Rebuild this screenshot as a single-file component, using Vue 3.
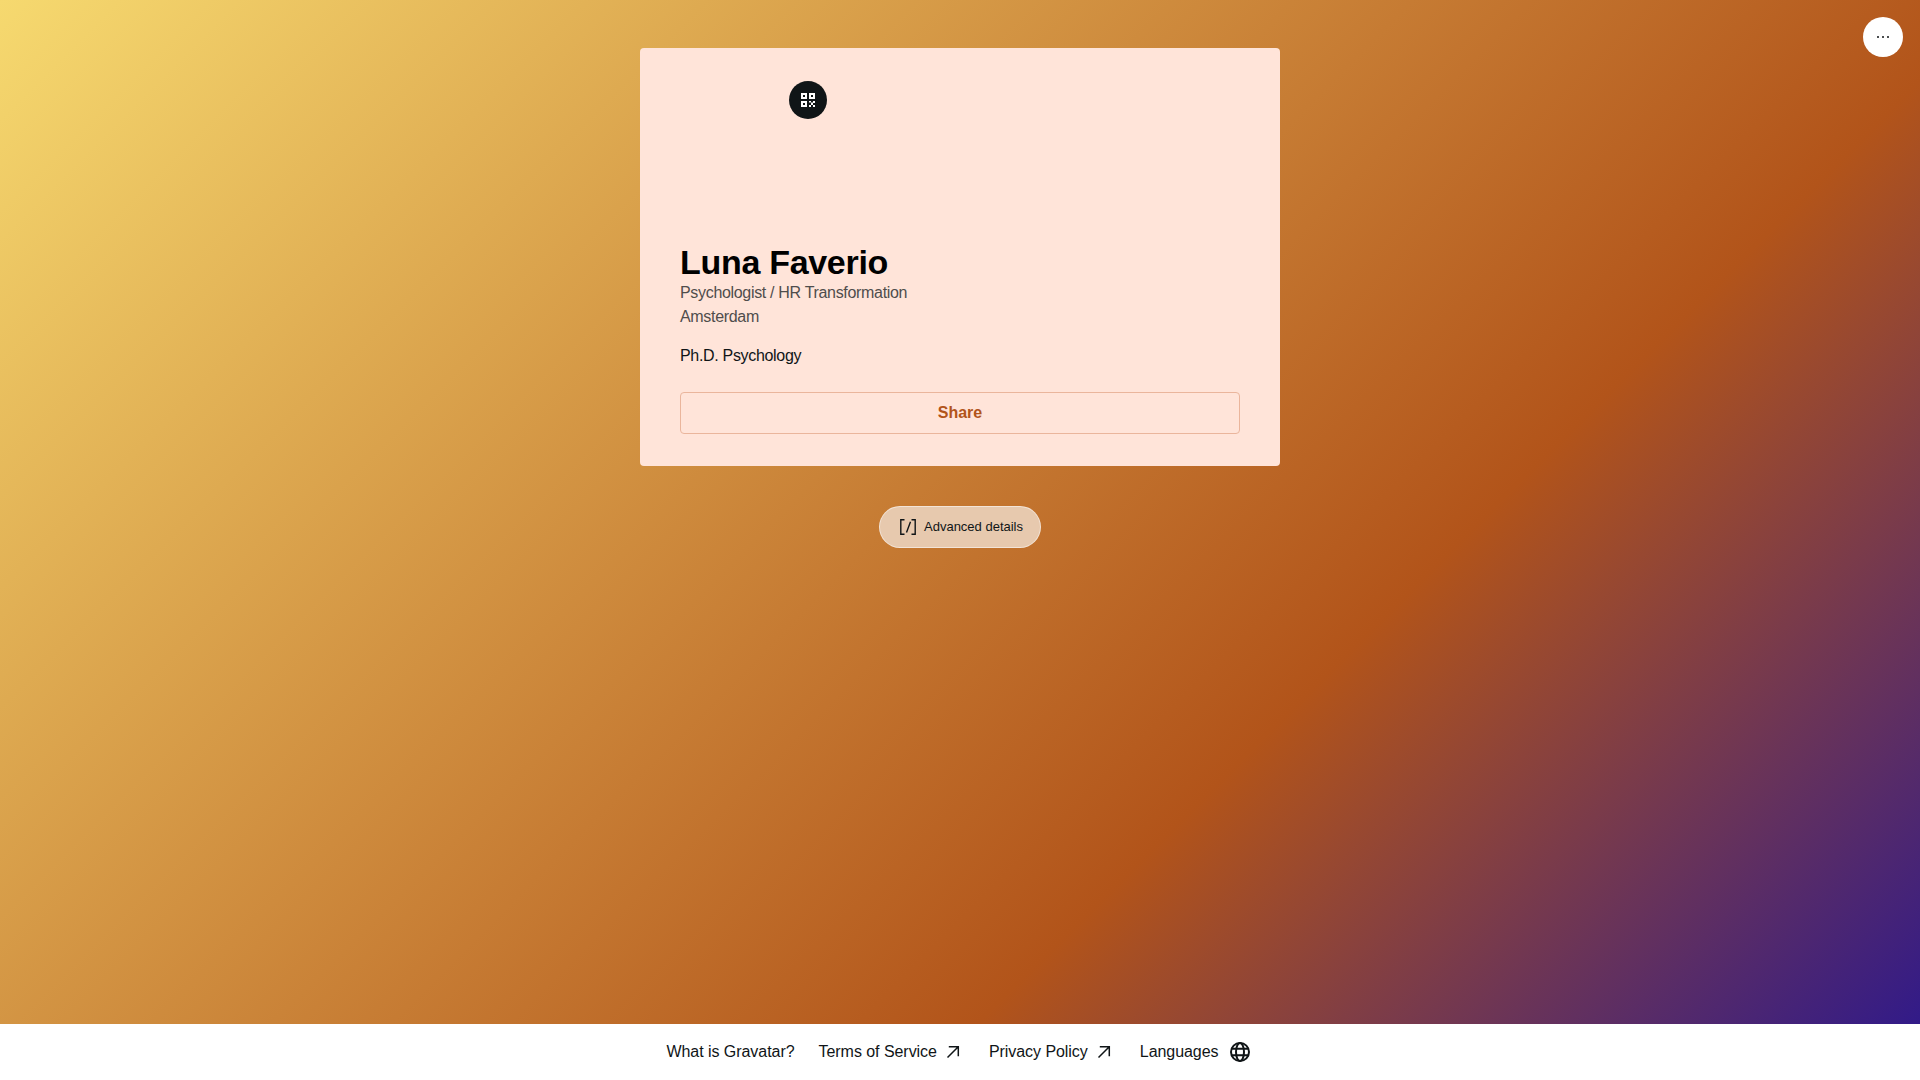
<script setup>
const footerLinks = [
  { label: "What is Gravatar?", icon: null },
  { label: "Terms of Service", icon: "arrow" },
  { label: "Privacy Policy", icon: "arrow" },
  { label: "Languages", icon: "globe" },
];
</script>

<template>
  <div class="page">
    <button class="menu-btn" aria-label="More">
      <svg width="24" height="24" viewBox="0 0 24 24" fill="#101517">
        <rect x="6" y="11" width="2" height="2" rx="1" />
        <rect x="11" y="11" width="2" height="2" rx="1" />
        <rect x="16" y="11" width="2" height="2" rx="1" />
      </svg>
    </button>

    <main class="content">
      <section class="card">
        <button class="qr-btn" aria-label="QR code">
          <svg width="16" height="16" viewBox="0 0 16 16" fill="#fff">
            <path fill-rule="evenodd" d="M1 1h6v6H1zM3 3v2h2V3zM9 1h6v6H9zM11 3v2h2V3zM1 9h6v6H1zM3 11v2h2v-2z" />
            <path d="M9 9h2v1.500H9zM13 9h2v2h-2zM11 10.500h2V13h-2zM9 13h2v2H9zM13 13h2v2h-2z" />
          </svg>
        </button>
        <div class="avatar-slot"></div>
        <h1 class="name">Luna Faverio</h1>
        <p class="meta">Psychologist / HR Transformation</p>
        <p class="meta">Amsterdam</p>
        <p class="bio">Ph.D. Psychology</p>
        <button class="share">Share</button>
      </section>

      <button class="advanced">
        <svg width="20" height="20" viewBox="0 0 20 20" fill="none" stroke="#101517" stroke-width="1.400">
          <path d="M6.500 2.700H2.800v14.600h3.700M13.500 2.700h3.700v14.600h-3.700M12.500 4.800L8.500 15.500" />
        </svg>
        <span>Advanced details</span>
      </button>
    </main>

    <footer class="footer">
      <a v-for="link in footerLinks" :key="link.label" class="foot-link" href="#">
        <span>{{ link.label }}</span>
        <svg v-if="link.icon === 'arrow'" width="24" height="24" viewBox="0 0 24 24" fill="none" stroke="#101517" stroke-width="1.500">
          <path d="M6.500 17.500L17 7M7.800 6.800h9.500v9.500" />
        </svg>
        <svg v-if="link.icon === 'globe'" class="globe" width="24" height="24" viewBox="0 0 24 24" fill="none" stroke="#101517" stroke-width="2">
          <circle cx="12" cy="12" r="9" />
          <ellipse cx="12" cy="12" rx="4" ry="9" />
          <path d="M3.500 8.800h17M3.500 15.200h17" />
        </svg>
      </a>
    </footer>
  </div>
</template>

<style scoped>
.page {
  position: relative;
  display: flex;
  flex-direction: column;
  min-height: 100vh;
  font-family: "Liberation Sans", Arial, sans-serif;
  color: #101517;
  background: linear-gradient(135deg, #f6d96f 0%, #b2541a 66.7%, #2a178f 100%);
}

.menu-btn {
  position: absolute;
  top: 17px;
  right: 17px;
  display: flex;
  align-items: center;
  justify-content: center;
  width: 40px;
  height: 40px;
  padding: 0;
  border: none;
  border-radius: 50%;
  background: #fff;
}

.content {
  flex: 1;
  display: flex;
  flex-direction: column;
  align-items: center;
  gap: 40px;
  padding-top: 48px;
}

.card {
  position: relative;
  box-sizing: border-box;
  width: 640px;
  padding: 40px 40px 32px;
  border-radius: 4px;
  background: #ffe4d9;
}

.qr-btn {
  position: absolute;
  top: 33px;
  left: 149px;
  display: flex;
  align-items: center;
  justify-content: center;
  width: 38px;
  height: 38px;
  padding: 0;
  border: none;
  border-radius: 50%;
  background: #101517;
}

.avatar-slot {
  height: 156px;
}

.name {
  margin: 0 0 1px;
  font-size: 34px;
  line-height: 36px;
  font-weight: 700;
  letter-spacing: -0.3px;
  color: #000;
}

.meta {
  margin: 0;
  font-size: 16px;
  line-height: 24px;
  letter-spacing: -0.32px;
  color: #4f4d4c;
}

.bio {
  margin: 15px 0 0;
  font-size: 16px;
  line-height: 24px;
  letter-spacing: -0.32px;
  color: #101517;
}

.share {
  display: block;
  box-sizing: border-box;
  width: 100%;
  height: 42px;
  margin-top: 24px;
  border: 1px solid #eab59c;
  border-radius: 4px;
  background: transparent;
  font-family: inherit;
  font-size: 16px;
  font-weight: 700;
  color: #b2541a;
}

.advanced {
  display: flex;
  align-items: center;
  gap: 6px;
  box-sizing: border-box;
  width: 162px;
  height: 42px;
  padding: 0 0 0 18px;
  border: 1px solid rgba(255, 255, 255, 0.5);
  border-radius: 21px;
  background: #e7c9ae;
  font-family: inherit;
  font-size: 13px;
  color: #101517;
}

.advanced span {
  margin-bottom: 2px;
}

.footer {
  display: flex;
  align-items: center;
  justify-content: center;
  gap: 24px;
  height: 56px;
  padding-right: 2px;
  background: #fff;
}

.foot-link {
  display: flex;
  align-items: center;
  gap: 4px;
  font-size: 16px;
  letter-spacing: -0.05px;
  color: #101517;
  text-decoration: none;
}

.globe {
  margin-left: 5px;
}
</style>
